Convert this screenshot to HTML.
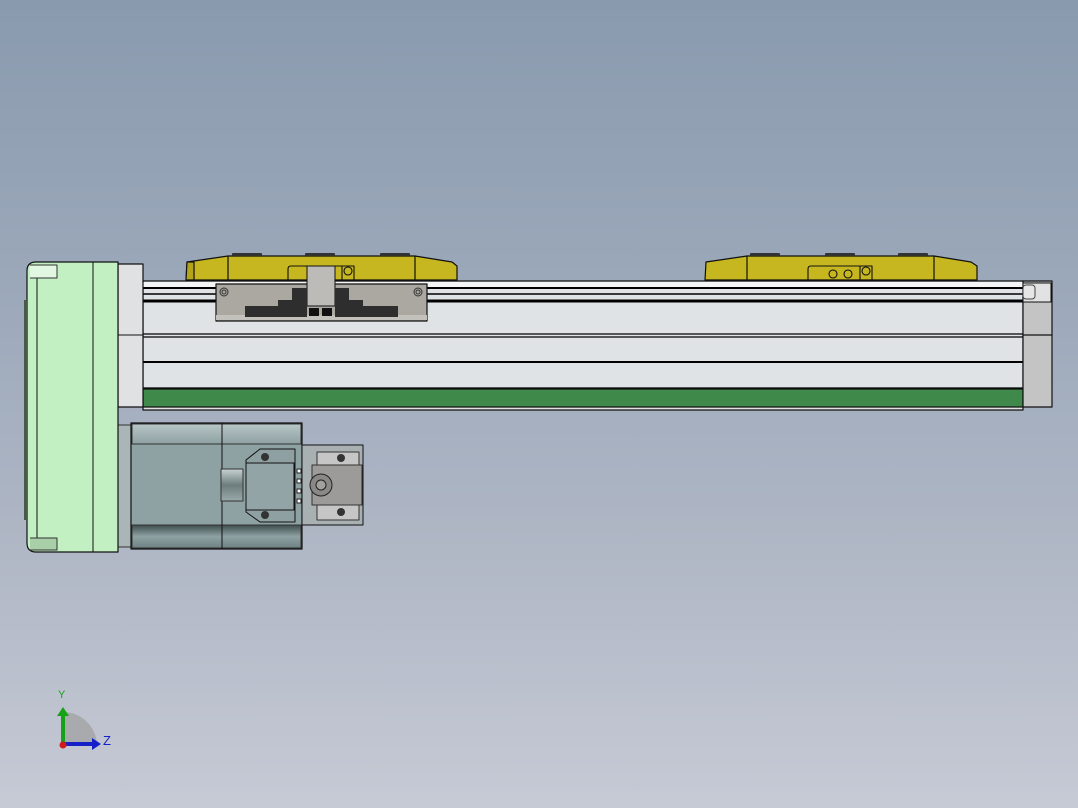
<!DOCTYPE html>
<html><head><meta charset="utf-8"><style>
html,body{margin:0;padding:0;width:1078px;height:808px;overflow:hidden}
body{background:linear-gradient(#8a9aae 0%,#9ba8ba 35%,#b1b8c6 70%,#c6cad5 100%)}
svg{position:absolute;left:0;top:0}
text{font-family:"Liberation Sans",sans-serif}
</style></head><body>
<svg width="1078" height="808" viewBox="0 0 1078 808" stroke-linejoin="round">
<defs>
<linearGradient id="mt" x1="0" y1="0" x2="0" y2="1"><stop offset="0" stop-color="#b8c7c8"/><stop offset="1" stop-color="#8ea0a1"/></linearGradient>
<linearGradient id="mb" x1="0" y1="0" x2="0" y2="1"><stop offset="0" stop-color="#3f4d4e"/><stop offset="0.5" stop-color="#8fa2a3"/><stop offset="1" stop-color="#6f8283"/></linearGradient>
<linearGradient id="sh" x1="0" y1="0" x2="0" y2="1"><stop offset="0" stop-color="#c8d2d2"/><stop offset="0.5" stop-color="#6d7d7e"/><stop offset="1" stop-color="#9aa9aa"/></linearGradient>
</defs>
<!-- yellow carriages -->
<g stroke="#111" stroke-width="1.2">
<path d="M187 262 L228 256 L415 256 L452 262 L457 266 L457 280 L186 280 Z" fill="#c6b61f"/>
<path d="M187 262 L194 262 L194 280 L186 280 Z" fill="#b3a41a"/>
<line x1="228" y1="256" x2="228" y2="280"/><line x1="415" y1="256" x2="415" y2="280"/>
<path d="M706 262 L747 256 L934 256 L971 262 L977 266 L977 280 L705 280 Z" fill="#c6b61f"/>
<line x1="747" y1="256" x2="747" y2="280"/><line x1="934" y1="256" x2="934" y2="280"/>
</g>
<g fill="#333"><rect x="232" y="253" width="30" height="3" rx="1"/><rect x="305" y="253" width="30" height="3" rx="1"/><rect x="380" y="253" width="30" height="3" rx="1"/>
<rect x="750" y="253" width="30" height="3" rx="1"/><rect x="825" y="253" width="30" height="3" rx="1"/><rect x="898" y="253" width="30" height="3" rx="1"/></g>
<g fill="none" stroke="#111" stroke-width="1.1">
<path d="M288 280 V269 Q288 266 291 266 H343"/><circle cx="313" cy="273" r="4"/><circle cx="329" cy="273" r="4"/><circle cx="348" cy="271" r="4"/><rect x="342" y="266" width="12" height="14"/>
<path d="M808 280 V269 Q808 266 811 266 H862"/><circle cx="833" cy="274" r="4"/><circle cx="848" cy="274" r="4"/><circle cx="866" cy="271" r="4"/><rect x="860" y="266" width="12" height="14"/>
</g>
<!-- rail -->
<rect x="143" y="281" width="880" height="129" fill="#dfe3e6" stroke="#111" stroke-width="1.2"/>
<rect x="143" y="282" width="880" height="5" fill="#f4f5f6"/>
<g stroke="#000"><line x1="143" y1="288" x2="1023" y2="288" stroke-width="2"/><line x1="143" y1="294" x2="1023" y2="294" stroke-width="1.5"/><line x1="143" y1="301" x2="1023" y2="301" stroke-width="3"/>
<line x1="143" y1="334" x2="1023" y2="334" stroke-width="1.3"/><line x1="143" y1="337" x2="1023" y2="337" stroke-width="1.3"/><line x1="143" y1="362" x2="1023" y2="362" stroke-width="2"/><line x1="143" y1="388" x2="1023" y2="388" stroke-width="1.3"/></g>
<rect x="143" y="389" width="880" height="18" fill="#3f8a4a" stroke="#111" stroke-width="1.2"/>
<!-- end cap -->
<rect x="1023" y="281" width="29" height="126" fill="#c4c4c4" stroke="#111" stroke-width="1.2"/>
<rect x="1023" y="283" width="28" height="19" fill="#e2e2e2" stroke="#111"/>
<rect x="1023" y="285" width="12" height="14" rx="3" fill="#e6e6e6" stroke="#444"/>
<line x1="1023" y1="335" x2="1052" y2="335" stroke="#111" stroke-width="1.2"/>
<!-- bracket on carriage -->
<rect x="216" y="284" width="211" height="37" fill="#aba8a2" stroke="#111" stroke-width="1.2"/>
<rect x="216" y="315" width="211" height="5" fill="#c3c1bc"/>
<rect x="307" y="266" width="28" height="40" fill="#bdbbb7" stroke="#111"/>
<path d="M245 306 H278 V300 H292 V288 H307 V317 H245 Z" fill="#2e2e2e"/>
<path d="M335 288 H349 V300 H363 V306 H398 V317 H335 Z" fill="#2e2e2e"/>
<rect x="309" y="308" width="10" height="8" fill="#111"/><rect x="322" y="308" width="10" height="8" fill="#111"/>
<g fill="none" stroke="#333"><circle cx="224" cy="292" r="4"/><circle cx="224" cy="292" r="2"/><circle cx="418" cy="292" r="4"/><circle cx="418" cy="292" r="2"/></g>
<!-- gray block -->
<rect x="118" y="264" width="25" height="143" fill="#dfe1e3" stroke="#111" stroke-width="1.2"/>
<line x1="118" y1="335" x2="143" y2="335" stroke="#111"/>
<!-- motor -->
<rect x="118" y="425" width="14" height="122" fill="#a9b5b6" stroke="#333"/>
<rect x="131" y="423" width="171" height="126" fill="#8fa2a3" stroke="#111" stroke-width="1.2"/>
<rect x="132" y="424" width="169" height="20" fill="url(#mt)" stroke="#333"/>
<rect x="132" y="525" width="169" height="23" fill="url(#mb)" stroke="#333"/>
<line x1="222" y1="423" x2="222" y2="549" stroke="#111"/>
<rect x="221" y="469" width="22" height="32" fill="url(#sh)" stroke="#333"/>
<path d="M246 460 L260 449 H295 V522 H260 L246 512 Z" fill="#8ea0a1" stroke="#111"/>
<rect x="246" y="463" width="48" height="47" fill="#92a4a5" stroke="#111"/>
<g fill="#fff" stroke="#222"><rect x="297" y="469" width="4" height="4"/><rect x="297" y="479" width="4" height="4"/><rect x="297" y="489" width="4" height="4"/><rect x="297" y="499" width="4" height="4"/></g>
<rect x="302" y="445" width="61" height="80" fill="#a8b0b2" stroke="#111"/>
<rect x="317" y="452" width="42" height="68" fill="#c6c6c6" stroke="#333"/>
<rect x="312" y="465" width="50" height="40" fill="#9d9b99" stroke="#333"/>
<circle cx="321" cy="485" r="11" fill="#8a8886" stroke="#222"/><circle cx="321" cy="485" r="5" fill="#a3a19e" stroke="#222"/>
<g fill="#333"><circle cx="265" cy="457" r="4"/><circle cx="265" cy="515" r="4"/><circle cx="341" cy="458" r="4"/><circle cx="341" cy="512" r="4"/></g>
<!-- green cover -->
<path d="M36 262 H118 V552 H36 Q27 552 27 543 V271 Q27 262 36 262 Z" fill="#c2f0c2" stroke="#111" stroke-width="1.2"/>
<line x1="37" y1="268" x2="37" y2="547" stroke="#111"/>
<line x1="93" y1="262" x2="93" y2="552" stroke="#111"/>
<path d="M30 265 H57 V278 H30" fill="#e2f7e2" stroke="#333"/>
<path d="M30 538 H57 V550 H30" fill="#a9cfa9" stroke="#333"/>
<rect x="24" y="300" width="3" height="220" fill="#4a5a4a"/>
<!-- axis triad -->
<path d="M63 745 V712 A34 34 0 0 1 97 745 Z" fill="#a9aaae"/>
<rect x="61" y="714" width="4" height="31" fill="#17a117"/><path d="M57 716 L63 707 L69 716 Z" fill="#17a117"/>
<rect x="63" y="742" width="30" height="4" fill="#1620c8"/><path d="M92 738 L101 744 L92 750 Z" fill="#1620c8"/>
<circle cx="63" cy="745" r="3.5" fill="#d21a1a"/>
<text x="58" y="698" font-size="11" fill="#1ba51b">Y</text>
<text x="103" y="745" font-size="13" fill="#1620c8">Z</text>
</svg>
</body></html>
